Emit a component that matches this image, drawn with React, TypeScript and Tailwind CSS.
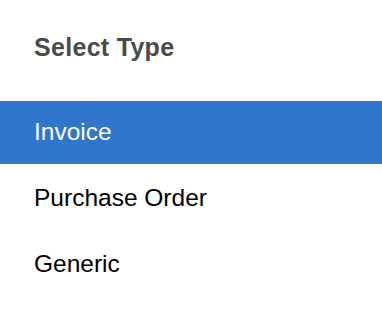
import { useState } from "react";

const TYPES = ["Invoice", "Purchase Order", "Generic"];

export default function App() {
  const [selected, setSelected] = useState("Invoice");

  return (
    <div className="w-[382px] h-[328px] bg-white font-['Liberation_Sans',Arial,sans-serif]">
      <div className="pt-[32px] pl-[34px] h-[101px]">
        <h2 className="text-[25px] leading-[30px] font-bold tracking-[0.3px] text-[#4a4a4a]">Select Type</h2>
      </div>
      <ul className="flex flex-col gap-[3px]">
        {TYPES.map((type) => (
          <li
            key={type}
            onClick={() => setSelected(type)}
            className={
              type === selected
                ? "h-[63px] flex items-center pl-[34px] text-[24.5px] bg-[#3076cc] text-white cursor-pointer"
                : "h-[63px] flex items-center pl-[34px] text-[24.5px] text-black cursor-pointer"
            }
          >
            {type}
          </li>
        ))}
      </ul>
    </div>
  );
}
